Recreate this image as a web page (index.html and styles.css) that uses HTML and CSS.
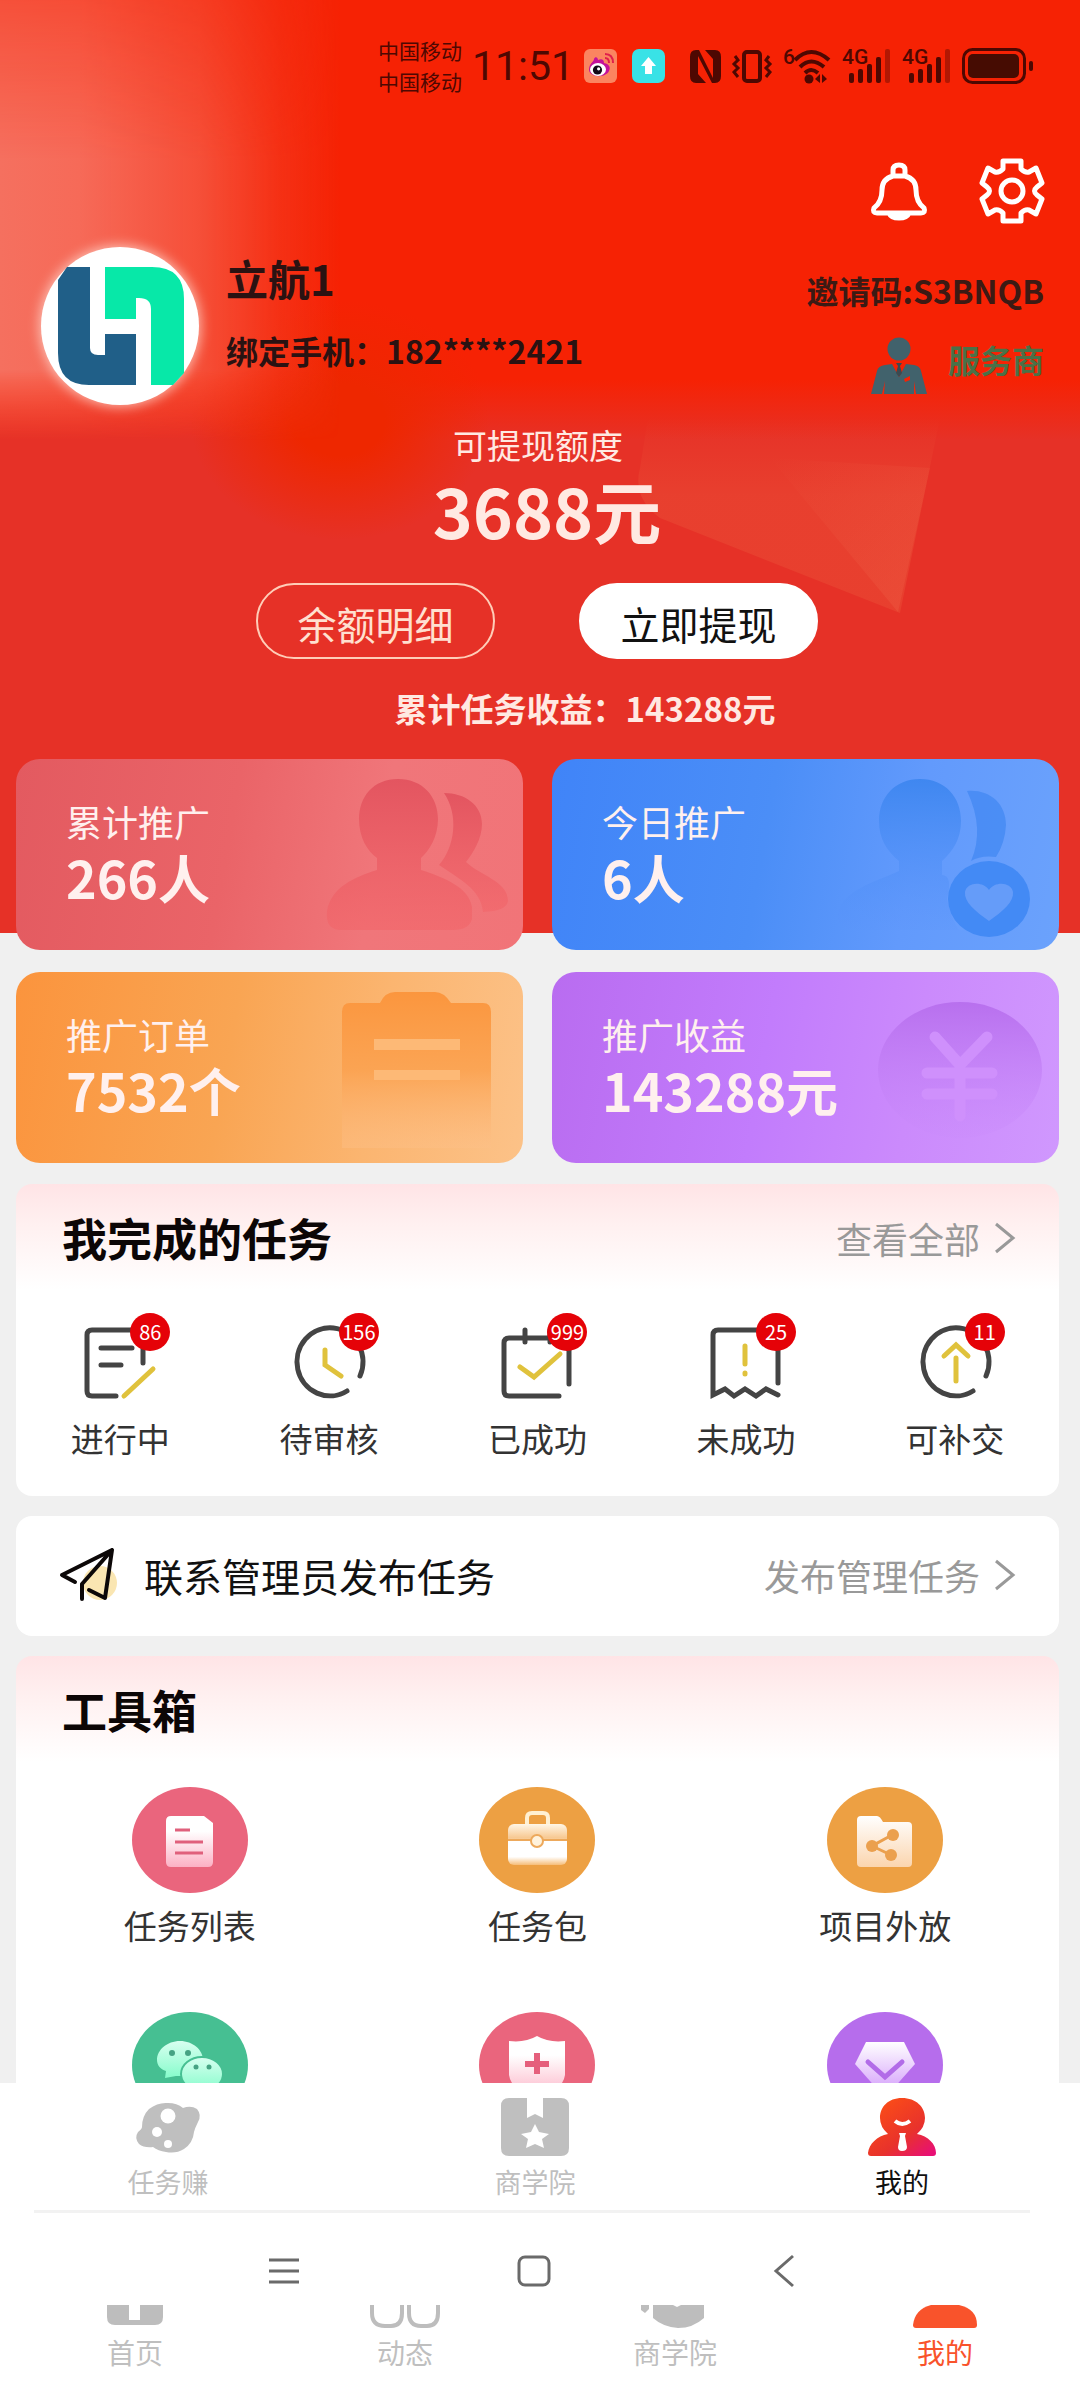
FILE: index.html
```html
<!DOCTYPE html>
<html lang="zh-CN">
<head>
<meta charset="utf-8">
<meta name="viewport" content="width=device-width, initial-scale=1">
<title>我的</title>
<link rel="stylesheet" href="styles.css">
</head>
<body>
<header class="hero">
  <svg class="hero-fold" viewBox="0 0 320 230" aria-hidden="true">
    <defs>
      <linearGradient id="fold" x1="0" y1="0" x2="0" y2="1"><stop offset="0" stop-color="#ee5a3a" stop-opacity="0"/><stop offset=".4" stop-color="#ec5a3c" stop-opacity=".35"/><stop offset="1" stop-color="#ec5a3c" stop-opacity=".35"/></linearGradient>
      <linearGradient id="fold2" x1="0" y1="0" x2="1" y2="1"><stop offset="0" stop-color="#f0694c" stop-opacity="0"/><stop offset="1" stop-color="#f0694c" stop-opacity=".3"/></linearGradient>
    </defs>
    <path d="M18 10H310L270 205L30 110Q2 90 10 60Z" fill="url(#fold)"/>
    <path d="M140 50L300 60L268 204Z" fill="url(#fold2)"/>
  </svg>

  <div class="status">
    <div class="carriers"><span>中国移动</span><span>中国移动</span></div>
    <time class="clock">11:51</time>
    <div class="status-apps">
      <svg width="33" height="34" viewBox="0 0 33 34" aria-hidden="true"><rect width="33" height="34" rx="6" fill="#fb8560"/><path d="M5 21C5 14 10 13 10 10C11 7 14 8 14 11C18 9 20 11 20 14C25 15 27 18 25 22C22 29 6 29 5 21Z" fill="#c4119a"/><ellipse cx="14" cy="20.500" rx="8" ry="6.500" fill="#fff"/><circle cx="13.500" cy="21" r="4.600" fill="#120818"/><circle cx="14.600" cy="19.800" r="1.600" fill="#fff"/><path d="M21 5Q29 5 29 14M21 9Q25 9 25 14" fill="none" stroke="#e01f4c" stroke-width="2"/></svg>
      <svg width="33" height="34" viewBox="0 0 33 34" aria-hidden="true"><rect width="33" height="34" rx="7" fill="#39e2e6"/><path d="M16.500 8L24 17H20V25H13V17H9Z" fill="#fff"/></svg>
    </div>
    <div class="status-icons">
      <svg width="31" height="33" viewBox="0 0 31 33" aria-hidden="true"><path d="M6 0H9L23 28V9L15 0H25Q31 0 31 7V26Q31 33 25 33H22L8 6V24L16 33H6Q0 33 0 26V7Q0 0 6 0Z" fill="#4e0802"/></svg>
      <svg width="40" height="33" viewBox="0 0 40 33" fill="none" stroke="#4e0802" stroke-width="4" aria-hidden="true"><rect x="12" y="2" width="16" height="29" rx="3"/><path stroke-width="3" d="M3 6L6 10L2 14L6 18L2 22L6 27M37 6L34 10L38 14L34 18L38 22L34 27"/></svg>
      <svg width="48" height="36" viewBox="0 0 48 36" fill="none" stroke="#4e0802" stroke-width="4" aria-hidden="true"><path d="M12 12Q28 -4 46 12M17 19Q28 8 41 19M22 25Q28 19 35 25"/><circle cx="26" cy="31" r="4.500" fill="#4e0802" stroke="none"/><path d="M37 26V35L32 31ZM39 26V35L44 31Z" fill="#4e0802" stroke="none"/><text class="signal-text" x="0" y="16">6</text></svg>
      <svg width="49" height="36" viewBox="0 0 49 36" fill="#4e0802" aria-hidden="true"><rect x="7" y="25" width="5" height="10" rx="2"/><rect x="16" y="21" width="5" height="14" rx="2"/><rect x="25" y="16" width="5" height="19" rx="2"/><rect x="34" y="9" width="5" height="26" rx="2"/><rect x="43" y="1" width="5" height="34" rx="2" opacity=".4"/><text class="signal-text" x="0" y="16">4G</text></svg>
      <svg width="49" height="36" viewBox="0 0 49 36" fill="#4e0802" aria-hidden="true"><rect x="7" y="25" width="5" height="10" rx="2"/><rect x="16" y="21" width="5" height="14" rx="2"/><rect x="25" y="16" width="5" height="19" rx="2"/><rect x="34" y="9" width="5" height="26" rx="2"/><rect x="43" y="1" width="5" height="34" rx="2" opacity=".4"/><text class="signal-text" x="0" y="16">4G</text></svg>
      <svg width="72" height="36" viewBox="0 0 72 36" aria-hidden="true"><rect x="1.500" y="1.500" width="61" height="33" rx="9" fill="none" stroke="#4e0802" stroke-width="3"/><rect x="6" y="6" width="51" height="24" rx="5" fill="#460c02"/><rect x="67" y="13" width="4" height="10" rx="2" fill="#4e0802"/></svg>
    </div>
  </div>

  <div class="actions">
    <button class="icon-btn" type="button" aria-label="通知"><svg width="56" height="58" viewBox="0 0 56 58" fill="none" stroke="#fff" stroke-width="5" stroke-linejoin="round" aria-hidden="true"><path d="M22 14V8Q22 3 28 3T34 8V14Q45 17 45 28Q45 40 53 46Q55 51 50 51H6Q1 51 3 46Q11 40 11 28Q11 17 22 14ZM22 14H34M18 51Q20 56 28 56T38 51"/></svg></button>
    <button class="icon-btn" type="button" aria-label="设置"><svg width="66" height="66" viewBox="0 0 66 66" fill="none" stroke="#fff" stroke-width="5" stroke-linejoin="round" aria-hidden="true"><path d="M24 3H42V11Q46 15 50 14L57 10L63 25L58 29Q53 33 58 37L63 41L57 56L50 52Q46 51 42 55V63H24V55Q20 51 16 52L9 56L3 41L8 37Q13 33 8 29L3 25L9 10L16 14Q20 15 24 11Z"/><circle cx="33" cy="33" r="11"/></svg></button>
  </div>

  <div class="profile">
    <div class="avatar"><svg viewBox="0 0 158 158" aria-hidden="true"><path d="M26 20H49V101Q49 108 57 108H64V87H95V138H48Q17 138 17 106V33Z" fill="#205f88"/><path d="M64 20H111Q143 20 143 52V126L132 138H110V62Q110 51 98 51H95V72H64Z" fill="#07e8a8"/></svg></div>
    <div class="profile-info">
      <h1 class="name">立航1</h1>
      <p class="phone">绑定手机：182****2421</p>
    </div>
    <div class="profile-side">
      <p class="invite">邀请码:S3BNQB</p>
      <p class="role"><svg width="56" height="57" viewBox="0 0 56 57" aria-hidden="true"><circle cx="28" cy="12" r="11.500" fill="#41626c"/><path d="M0 57L6 34Q7 29 14 28L21 27L28 40L35 27L43 28Q49 29 50 34L56 57H45L43 44V57H13L14 44L11 57Z" fill="#41626c"/><path d="M25 26H31L29 29L31 36L28 40L25 36L27 29Z" fill="#3b4a50"/><path d="M33 42L39 39V43L34 45Z" fill="#f62204"/></svg><span>服务商</span></p>
    </div>
  </div>

  <section class="balance">
    <p class="balance-label">可提现额度</p>
    <p class="balance-value">3688元</p>
    <div class="balance-btns">
      <button class="pill pill-outline" type="button">余额明细</button>
      <button class="pill pill-solid" type="button">立即提现</button>
    </div>
    <p class="income">累计任务收益：143288元</p>
  </section>
</header>

<main>
  <section class="stats">
    <article class="stat stat-red">
      <svg class="stat-art" viewBox="0 0 230 191" aria-hidden="true"><defs><linearGradient id="gr" x1="0" y1="0" x2="0" y2="1"><stop offset="0" stop-color="#e35560"/><stop offset="1" stop-color="#f26468" stop-opacity=".55"/></linearGradient></defs><path d="M105 20C130 20 145 38 145 60C145 78 136 92 128 99V111C150 118 176 128 179 148V160Q176 171 160 171H48Q32 171 34 152C38 128 62 118 84 111V99C74 92 66 78 66 60C66 38 80 20 105 20Z" fill="url(#gr)"/><path d="M151 34C172 34 189 46 189 65C189 80 180 94 173 103C186 116 215 122 215 142Q214 152 190 153C188 130 166 120 146 106C162 88 166 56 151 34Z" fill="url(#gr)"/></svg>
      <h2 class="stat-label">累计推广</h2><p class="stat-value">266人</p>
    </article>
    <article class="stat stat-blue">
      <svg class="stat-art" viewBox="0 0 230 191" aria-hidden="true"><defs><linearGradient id="gb" x1="0" y1="0" x2="0" y2="1"><stop offset="0" stop-color="#3f87f0"/><stop offset="1" stop-color="#5a94fb" stop-opacity=".2"/></linearGradient></defs><path d="M91 20C116 20 132 38 132 62C132 80 124 92 113 102V116Q124 116 118 140Q122 160 130 171H30Q4 171 10 150C20 128 50 122 70 112V102C58 92 50 80 50 62C50 38 66 20 91 20Z" fill="url(#gb)"/><path d="M138 32C160 30 177 44 177 66Q176 84 167 98Q152 96 142 102Q156 70 138 32Z" fill="#4589f2" opacity=".8"/><ellipse cx="160" cy="140" rx="41" ry="38" fill="#438af5"/><path d="M160 162C146 152 135 143 136 133C138 123 154 122 160 131C166 122 182 123 184 133C185 143 174 152 160 162Z" fill="#659cf9"/></svg>
      <h2 class="stat-label">今日推广</h2><p class="stat-value">6人</p>
    </article>
    <article class="stat stat-orange">
      <svg class="stat-art" viewBox="0 0 230 191" aria-hidden="true"><defs><linearGradient id="go" x1="0" y1="0" x2="0" y2="1"><stop offset="0" stop-color="#fb963e"/><stop offset=".5" stop-color="#fba250" stop-opacity=".9"/><stop offset="1" stop-color="#fdc088" stop-opacity=".4"/></linearGradient></defs><path d="M57 31H87Q92 20 102 20H142Q151 20 158 31H190Q198 31 198 40V176H49V40Q49 31 57 31Z" fill="url(#go)"/><path d="M81 67H167V78H81ZM81 98H167V108H81Z" fill="#fdb976"/></svg>
      <h2 class="stat-label">推广订单</h2><p class="stat-value">7532个</p>
    </article>
    <article class="stat stat-purple">
      <svg class="stat-art" viewBox="0 0 230 191" aria-hidden="true"><defs><linearGradient id="gp" x1="0" y1="0" x2="0" y2="1"><stop offset="0" stop-color="#b870ee"/><stop offset="1" stop-color="#c98afb" stop-opacity=".2"/></linearGradient></defs><ellipse cx="131" cy="98" rx="82" ry="68" fill="url(#gp)"/><path d="M106 65L131 93L158 65M98 101H163M98 122H163M131 96V144" fill="none" stroke="#cf90fc" stroke-width="11" stroke-linecap="round"/></svg>
      <h2 class="stat-label">推广收益</h2><p class="stat-value">143288元</p>
    </article>
  </section>

  <section class="panel tasks">
    <div class="panel-head">
      <h2 class="panel-title">我完成的任务</h2>
      <a class="more" href="#">查看全部<svg width="22" height="32" viewBox="0 0 22 32" aria-hidden="true"><path d="M2 2L19 16L2 30"/></svg></a>
    </div>
    <nav class="task-row">
      <a class="task" href="#"><span class="task-icon"><svg width="70" height="72" viewBox="0 0 70 72" aria-hidden="true"><path d="M31 69H7Q2 69 2 64V8Q2 3 7 3H53Q58 3 58 8V36M16 21H47M16 38H36"/><path class="accent" d="M39 69L68 42"/></svg><b class="badge">86</b></span>进行中</a>
      <a class="task" href="#"><span class="task-icon"><svg width="70" height="72" viewBox="0 0 70 72" aria-hidden="true"><path d="M53 64A33 34 0 1 1 66 49"/><path class="accent" d="M31 23V38L47 49"/></svg><b class="badge">156</b></span>待审核</a>
      <a class="task" href="#"><span class="task-icon"><svg width="70" height="72" viewBox="0 0 70 72" aria-hidden="true"><path d="M57 69H7Q2 69 2 64V16Q2 11 7 11H62Q67 11 67 16V57M23 3V15M48 3V15"/><path class="accent" d="M18 40L32 50L58 27"/></svg><b class="badge">999</b></span>已成功</a>
      <a class="task" href="#"><span class="task-icon"><svg width="70" height="72" viewBox="0 0 70 72" aria-hidden="true"><path d="M67 56V8Q67 3 62 3H7Q2 3 2 8V68L14 62L23 69L34 62L45 69L55 62L67 68"/><path class="accent" d="M34 19V37M34 46V47"/></svg><b class="badge">25</b></span>未成功</a>
      <a class="task" href="#"><span class="task-icon"><svg width="70" height="72" viewBox="0 0 70 72" aria-hidden="true"><path d="M53 64A33 34 0 1 1 66 49"/><path class="accent" d="M36 54V31M24 29L36 18L48 29"/></svg><b class="badge">11</b></span>可补交</a>
    </nav>
  </section>

  <section class="panel contact">
    <svg class="plane" width="58" height="54" viewBox="0 0 58 54" aria-hidden="true"><circle cx="40" cy="35" r="17" fill="#fae6b2"/><path d="M15 34L2 27L52 2L45 50L29 42M22 51V36L52 2" fill="none" stroke="#0c0808" stroke-width="4" stroke-linecap="round" stroke-linejoin="round"/></svg>
    <h2 class="contact-title">联系管理员发布任务</h2>
    <a class="more" href="#">发布管理任务<svg width="22" height="32" viewBox="0 0 22 32" aria-hidden="true"><path d="M2 2L19 16L2 30"/></svg></a>
  </section>

  <section class="panel tools">
    <div class="panel-head"><h2 class="panel-title">工具箱</h2></div>
    <nav class="tool-grid">
      <a class="tool" href="#"><svg width="116" height="106" viewBox="0 0 116 106" aria-hidden="true"><defs><linearGradient id="wp" x1="0" y1="0" x2="0" y2="1"><stop offset="0" stop-color="#fff"/><stop offset=".3" stop-color="#fff"/><stop offset="1" stop-color="#fcb0c4"/></linearGradient></defs><ellipse cx="58" cy="53" rx="58" ry="53" fill="#ea657d"/><path d="M39 29H72L81 36V75Q81 80 76 80H39Q34 80 34 75V34Q34 29 39 29Z" fill="url(#wp)"/><path d="M43 43H58M43 55H71M43 66H71" stroke="#e0607c" stroke-width="3"/></svg>任务列表</a>
      <a class="tool" href="#"><svg width="116" height="106" viewBox="0 0 116 106" aria-hidden="true"><defs><linearGradient id="wo" x1="0" y1="0" x2="0" y2="1"><stop offset="0" stop-color="#fff6e6"/><stop offset=".35" stop-color="#f7c78f"/><stop offset=".4" stop-color="#fff"/><stop offset=".8" stop-color="#fff"/><stop offset="1" stop-color="#f6bd78"/></linearGradient></defs><ellipse cx="58" cy="53" rx="58" ry="53" fill="#eda043"/><path d="M48 38V31Q48 26 53 26H64Q69 26 69 31V38" fill="none" stroke="#fff0d2" stroke-width="4"/><rect x="29" y="37" width="59" height="41" rx="6" fill="url(#wo)"/><path d="M29 53H88" stroke="#eda95c" stroke-width="2"/><circle cx="58" cy="54" r="6" fill="#fff2dc" stroke="#eda95c" stroke-width="2"/></svg>任务包</a>
      <a class="tool" href="#"><svg width="116" height="106" viewBox="0 0 116 106" aria-hidden="true"><defs><linearGradient id="wf" x1="0" y1="0" x2="0" y2="1"><stop offset="0" stop-color="#fff"/><stop offset="1" stop-color="#fbd5ae"/></linearGradient></defs><ellipse cx="58" cy="53" rx="58" ry="53" fill="#eda043"/><path d="M34 29H50Q53 29 56 35H81Q85 35 85 39V76Q85 80 81 80H34Q30 80 30 76V33Q30 29 34 29Z" fill="url(#wf)"/><path d="M65 48L45 59L64 68" fill="none" stroke="#eba04e" stroke-width="3"/><circle cx="66" cy="48" r="6" fill="#eba04e"/><circle cx="45" cy="59" r="6" fill="#eba04e"/><circle cx="64" cy="68" r="6" fill="#eba04e"/></svg>项目外放</a>
    </nav>
    <nav class="tool-grid tool-grid-peek">
      <a class="tool" href="#" aria-label="微信"><svg width="116" height="106" viewBox="0 0 116 106" aria-hidden="true"><defs><linearGradient id="wg" x1="0" y1="0" x2="0" y2="1"><stop offset="0" stop-color="#d8fff0"/><stop offset="1" stop-color="#86fccb"/></linearGradient></defs><ellipse cx="58" cy="53" rx="58" ry="53" fill="#46bf92"/><path d="M48 29C61 29 71 38 71 48C71 59 61 65 44 64L33 66L34 59C28 57 25 53 25 48C25 38 35 29 48 29Z" fill="url(#wg)"/><circle cx="40" cy="41" r="3" fill="#46a383"/><circle cx="56" cy="41" r="3" fill="#46a383"/><ellipse cx="70" cy="62" rx="21" ry="17" fill="url(#wg)" stroke="#46bf92" stroke-width="2"/><circle cx="64" cy="55" r="2.500" fill="#46a383"/><circle cx="77" cy="55" r="2.500" fill="#46a383"/></svg></a>
      <a class="tool" href="#" aria-label="保障"><svg width="116" height="106" viewBox="0 0 116 106" aria-hidden="true"><ellipse cx="58" cy="53" rx="58" ry="53" fill="#ea657d"/><path d="M58 24Q70 31 86 29V63Q84 78 58 88Q32 78 30 63V29Q46 31 58 24Z" fill="url(#wp)"/><path d="M58 41V62M46 52H70" stroke="#e55f7c" stroke-width="6"/></svg></a>
      <a class="tool" href="#" aria-label="会员"><svg width="116" height="106" viewBox="0 0 116 106" aria-hidden="true"><defs><linearGradient id="wv" x1="0" y1="0" x2="0" y2="1"><stop offset="0" stop-color="#fff"/><stop offset="1" stop-color="#cf94fa"/></linearGradient></defs><ellipse cx="58" cy="53" rx="58" ry="53" fill="#b66dec"/><path d="M39 30H77L88 52L58 86L28 52Z" fill="url(#wv)"/><path d="M41 50L58 65L75 50" fill="none" stroke="#b26ce8" stroke-width="5" stroke-linecap="round"/></svg></a>
    </nav>
  </section>
</main>

<footer class="bottom">
  <nav class="tabs">
    <a class="tab" href="#"><svg width="68" height="58" viewBox="0 0 68 58" aria-hidden="true"><path d="M8 29Q8 18 15 11Q24 4 34 5Q43 5 49 10Q57 7 63 11Q68 17 64 24Q61 30 60 34Q59 45 50 51Q42 56 32 54Q24 53 19 49Q10 50 5 46Q0 40 4 34Q8 31 8 29Z" fill="#bfbfbf"/><circle cx="34" cy="18" r="7.500" fill="#fff"/><circle cx="23" cy="34" r="5" fill="#fff"/><circle cx="34" cy="46" r="4" fill="#fff"/></svg>任务赚</a>
    <a class="tab" href="#"><svg width="68" height="58" viewBox="0 0 68 58" aria-hidden="true"><path d="M8 0H26V20L34 16L42 20V0H60Q68 0 68 8V50Q68 58 60 58H8Q0 58 0 50V8Q0 0 8 0Z" fill="#bfbfbf"/><path d="M34 26L38 34L48 36L41 41L43 50L34 46L25 50L27 41L20 36L30 34Z" fill="#fff"/></svg>商学院</a>
    <a class="tab tab-on" href="#"><svg width="68" height="58" viewBox="0 0 68 58" aria-hidden="true"><defs><linearGradient id="me" x1=".1" y1=".1" x2=".9" y2="1"><stop offset="0" stop-color="#fc4e16"/><stop offset=".6" stop-color="#e8322c"/><stop offset="1" stop-color="#e80f76"/></linearGradient></defs><path d="M34 0C48 0 57 9 57 20Q57 29 49 36C60 38 68 46 68 55Q68 58 65 58H3Q0 58 0 55C1 46 9 38 20 36Q12 29 12 20C12 9 20 0 34 0Z" fill="url(#me)"/><path d="M27 23Q34 29 42 23" fill="none" stroke="#fff" stroke-width="4"/><path d="M31 35H38L37 38L39 49Q39 53 34 53Q30 53 30 49L32 38Z" fill="#fff"/></svg>我的</a>
  </nav>
  <div class="sysbar">
    <button class="icon-btn" type="button" aria-label="菜单"><svg width="32" height="32" viewBox="0 0 32 32" aria-hidden="true"><path d="M1 5H31M1 16H31M1 27H31"/></svg></button>
    <button class="icon-btn" type="button" aria-label="主页"><svg width="34" height="32" viewBox="0 0 34 32" aria-hidden="true"><rect x="2" y="2" width="30" height="28" rx="6"/></svg></button>
    <button class="icon-btn" type="button" aria-label="返回"><svg width="32" height="32" viewBox="0 0 32 32" aria-hidden="true"><path d="M25 1L8 16L25 31"/></svg></button>
  </div>
  <nav class="subtabs">
    <a class="subtab" href="#"><svg width="72" height="24" viewBox="0 0 72 24" aria-hidden="true"><path d="M8 0H30V15H41V0H64V12Q64 20 56 20H16Q8 20 8 12Z" fill="#bdbdbd"/></svg>首页</a>
    <a class="subtab" href="#"><svg width="72" height="24" viewBox="0 0 72 24" fill="none" stroke="#bdbdbd" stroke-width="4" aria-hidden="true"><path d="M3 0V8Q3 21 16 21H22Q33 21 33 8V0M40 0V8Q40 21 52 21H58Q69 21 69 8V0"/></svg>动态</a>
    <a class="subtab" href="#"><svg width="72" height="24" viewBox="0 0 72 24" aria-hidden="true"><path d="M2 0H10V4L6 8L2 5ZM14 0H34L38 2L42 0H65V13Q54 23 39 23Q24 22 14 13Z" fill="#bdbdbd"/></svg>商学院</a>
    <a class="subtab subtab-on" href="#"><svg width="72" height="24" viewBox="0 0 72 24" aria-hidden="true"><path d="M22 0H50Q68 4 68 20Q68 23 65 23H7Q4 23 4 20Q6 4 22 0Z" fill="#f9532b"/></svg>我的</a>
  </nav>
</footer>
</body>
</html>
```
FILE: styles.css
```css
* { box-sizing: border-box; }

body {
  margin: 0;
  background: #f0f0f0;
  color: #333;
  font-family: "Noto Sans CJK SC", sans-serif;
}

h1, h2, p { margin: 0; }
a { color: inherit; text-decoration: none; }
svg { display: block; flex: none; overflow: visible; }
button { font-family: inherit; cursor: pointer; }

.icon-btn { padding: 0; border: 0; background: none; }

/* red header; the stat cards overlap its lower edge */
.hero {
  position: relative;
  padding: 35px 0 201px;
  background:
    radial-gradient(ellipse 150px 120px at 340px 420px, #ee2700 30%, rgba(238, 39, 0, 0) 100%),
    linear-gradient(180deg, #f62204 0, #f62204 380px, rgba(246, 34, 4, 0) 440px),
    #e63127;
}

.hero::before {
  content: "";
  position: absolute;
  inset: 0 auto auto 0;
  width: 340px;
  height: 450px;
  background: linear-gradient(90deg, #f5705f 0, #f66a58 80px, rgba(245, 84, 62, .9) 200px, rgba(244, 60, 34, .55) 280px, rgba(243, 42, 10, 0) 100%);
  -webkit-mask-image: linear-gradient(180deg, rgba(0, 0, 0, .6) 0, #000 160px, #000 370px, transparent 440px);
  mask-image: linear-gradient(180deg, rgba(0, 0, 0, .6) 0, #000 160px, #000 370px, transparent 440px);
}

.hero-fold {
  position: absolute;
  top: 408px;
  right: 130px;
  width: 320px;
}

.hero > div, .balance { position: relative; }

.status {
  display: flex;
  align-items: center;
  justify-content: flex-end;
  gap: 10px;
  padding-right: 46px;
  color: #4e0802;
}

.carriers {
  display: flex;
  flex-direction: column;
  font-size: 21px;
  line-height: 31px;
}

.clock { font: 41px/62px Roboto, sans-serif; }
.status-apps { display: flex; gap: 15px; }
.status-icons { display: flex; align-items: center; gap: 11px; padding-left: 15px; }

.signal-text {
  font: 500 21px Roboto, sans-serif;
  fill: #4e0802;
  stroke: none;
}

.actions {
  display: flex;
  align-items: center;
  justify-content: flex-end;
  gap: 52px;
  padding: 61px 35px 0 0;
}

.profile {
  display: flex;
  gap: 27px;
  padding: 23px 36px 0 41px;
}

.avatar {
  flex: none;
  width: 158px;
  height: 158px;
  border-radius: 50%;
  background: #fff;
  box-shadow: 0 0 12px 2px rgba(255, 225, 215, .7);
}

.profile-info { flex: 1; color: #2a1212; font-weight: 700; }
.name { font-size: 42px; line-height: 62px; }
.phone { padding-top: 16px; font-size: 32px; line-height: 50px; }

.profile-side {
  display: flex;
  flex-direction: column;
  align-items: flex-end;
  padding-top: 18px;
  color: #3c1a14;
  font-size: 32px;
  font-weight: 700;
  line-height: 50px;
}

.role {
  display: flex;
  align-items: flex-start;
  gap: 21px;
  padding-top: 22px;
  color: #4a7148;
  line-height: 44px;
}

.balance {
  padding-top: 17px;
  color: #ffe9e2;
  text-align: center;
}

.balance-label { padding-right: 4px; font-size: 34px; line-height: 46px; }
.balance-value { padding-left: 14px; font-size: 68px; font-weight: 700; line-height: 84px; }

.balance-btns {
  display: flex;
  justify-content: center;
  gap: 84px;
  padding: 31px 6px 25px 0;
}

.pill {
  width: 239px;
  height: 76px;
  padding: 4px 0 0;
  border: 2px solid #ffcdb8;
  border-radius: 38px;
  font-size: 39px;
}

.pill-outline { background: transparent; color: #ffe0d0; }
.pill-solid { border-color: #fff; background: #fff; color: #111; }

.income { padding-left: 90px; font-size: 33px; font-weight: 700; line-height: 48px; }

.stats {
  position: relative;
  display: grid;
  grid-template-columns: 1fr 1fr;
  gap: 22px 29px;
  margin-top: -174px;
  padding: 0 21px 0 16px;
}

.stat {
  position: relative;
  overflow: hidden;
  padding: 35px 0 44px 50px;
  border-radius: 24px;
  color: #fff0ee;
}

.stat-art { position: absolute; top: 0; right: 0; height: 100%; }
.stat-label { position: relative; font-size: 36px; font-weight: 400; line-height: 54px; }
.stat-value { position: relative; font-size: 52px; font-weight: 700; line-height: 58px; }

.stat-red { background: linear-gradient(100deg, #e35a60, #ea6468 42%, #f0767a 70%, #f17478); }
.stat-blue { background: linear-gradient(100deg, #4084f8, #4b8ef7 42%, #629afc 70%, #6ba2fc); }
.stat-orange { background: linear-gradient(100deg, #fb943d, #f9a553 42%, #fbb570 70%, #fcc288); }
.stat-purple { background: linear-gradient(100deg, #b96cf0, #c27cfc 42%, #cb8afc 70%, #d098fe); }

.panel {
  margin: 21px 21px 0 16px;
  border-radius: 16px;
  background: #fff;
}

.tasks, .tools { background: linear-gradient(180deg, #ffe4e6 0, #fff0f0 40px, #fff 106px); }

.panel-head {
  display: flex;
  align-items: center;
  justify-content: space-between;
  padding: 21px 43px 0 46px;
}

.panel-title { color: #0c0606; font-size: 45px; font-weight: 700; line-height: 66px; }

.more {
  display: flex;
  align-items: center;
  gap: 14px;
  color: #999;
  font-size: 36px;
  line-height: 54px;
}

.more path { fill: none; stroke: #999; stroke-width: 3; }

.task-row {
  display: grid;
  grid-template-columns: repeat(5, 1fr);
  padding: 56px 0 34px;
}

.task {
  display: flex;
  flex-direction: column;
  align-items: center;
  gap: 15px;
  font-size: 33px;
  line-height: 48px;
}

.task-icon { position: relative; }

.task-icon path {
  fill: none;
  stroke: #444;
  stroke-width: 5;
  stroke-linecap: round;
}

.task-icon .accent { stroke: #e0c23c; }

.badge {
  position: absolute;
  top: -14px;
  right: -15px;
  width: 40px;
  height: 38px;
  border-radius: 50%;
  background: #e50208;
  color: #fff;
  font-size: 20px;
  font-weight: 400;
  line-height: 38px;
  text-align: center;
}

.contact {
  display: flex;
  align-items: center;
  margin-top: 20px;
  padding: 30px 43px 32px 44px;
}

.contact-title {
  flex: 1;
  padding-left: 26px;
  color: #111;
  font-size: 39px;
  font-weight: 400;
  line-height: 58px;
}

.tools { margin-top: 20px; border-radius: 16px 16px 0 0; }

.tool-grid {
  display: grid;
  grid-template-columns: repeat(3, 1fr);
  padding-top: 44px;
}

.tool-grid-peek { height: 134px; padding-top: 63px; overflow: hidden; }

.tool {
  display: flex;
  flex-direction: column;
  align-items: center;
  gap: 8px;
  font-size: 33px;
  line-height: 48px;
}

.bottom { background: #fff; color: #bfbfbf; }

.tabs {
  display: flex;
  justify-content: space-between;
  margin: 0 50px 0 34px;
  padding: 15px 87px 8px 93px;
  border-bottom: 3px solid #f2f2f2;
}

.tab {
  display: flex;
  flex-direction: column;
  align-items: center;
  gap: 6px;
  min-width: 82px;
  font-size: 27px;
  line-height: 40px;
}

.tab-on { color: #111; }

.sysbar {
  display: flex;
  justify-content: space-between;
  padding: 42px 280px 18px 268px;
}

.sysbar path, .sysbar rect { fill: none; stroke: #6a6a6a; stroke-width: 3; }

.subtabs {
  display: grid;
  grid-template-columns: repeat(4, 1fr);
  padding-bottom: 15px;
}

.subtab {
  display: flex;
  flex-direction: column;
  align-items: center;
  gap: 3px;
  font-size: 28px;
  line-height: 40px;
}

.subtab-on { color: #f9532b; }
```
